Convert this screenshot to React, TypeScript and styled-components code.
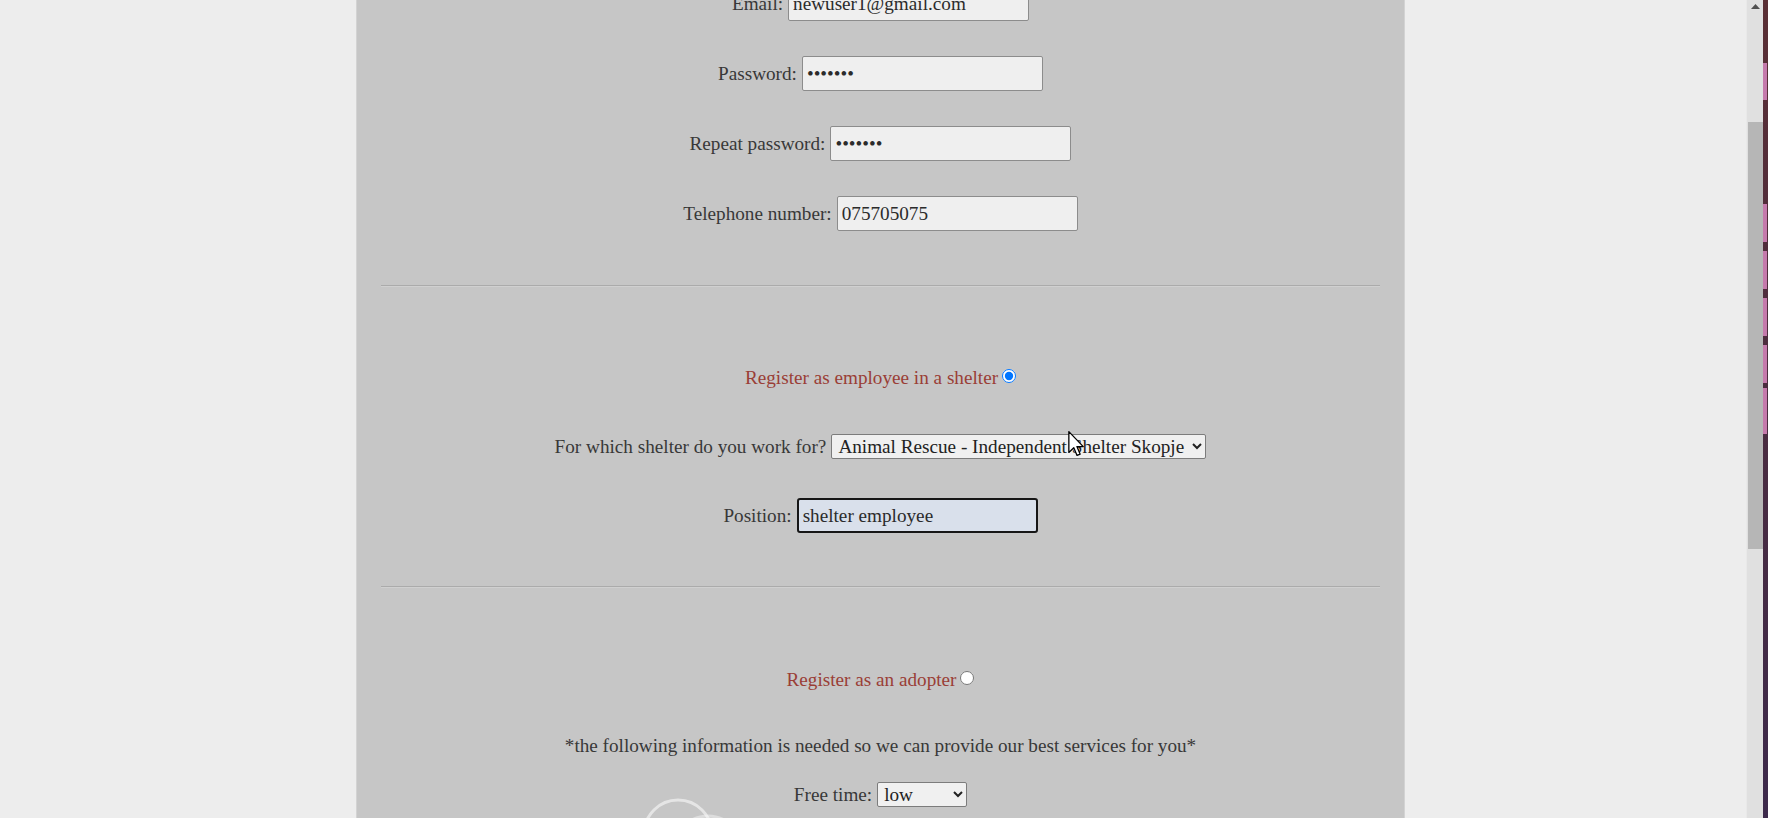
import styled, { createGlobalStyle } from "styled-components";

const GlobalStyle = createGlobalStyle`
  html, body {
    margin: 0;
    padding: 0;
    overflow: hidden;
  }
  body {
    font-family: "Liberation Serif", "Times New Roman", serif;
  }
`;

const Screen = styled.div`
  display: flex;
  width: 1768px;
  height: 818px;
  overflow: hidden;
`;

const Page = styled.main`
  position: relative;
  flex: 1;
  background: #ededed;
  overflow: hidden;
`;

const Panel = styled.section`
  box-sizing: border-box;
  width: 1049px;
  min-height: 900px;
  margin: -14px 0 0 356px;
  padding: 0 24px 60px;
  display: flex;
  flex-direction: column;
  background: #c6c6c6;
  border-left: 1px solid #d3d3d3;
  border-right: 1px solid #d3d3d3;
  font-size: 19.2px;
  color: #383838;
`;

const Row = styled.div<{ $top?: number; $h?: number }>`
  display: flex;
  justify-content: center;
  align-items: center;
  gap: 5px;
  height: ${(p) => p.$h ?? 35}px;
  margin-top: ${(p) => p.$top ?? 0}px;
`;

const Label = styled.label`
  white-space: nowrap;
  line-height: 22px;
`;

const TextInput = styled.input<{ $focused?: boolean }>`
  box-sizing: border-box;
  width: 241px;
  height: 35px;
  padding: 0 4px;
  font-family: "Liberation Serif", "Times New Roman", serif;
  font-size: 19.2px;
  color: #2b2b2b;
  outline: none;
  background: ${(p) => (p.$focused ? "#d9e0eb" : "#efefef")};
  border: ${(p) => (p.$focused ? "2px solid #161616" : "1px solid #8c8c8c")};
  border-radius: ${(p) => (p.$focused ? 3 : 2)}px;
`;

const Select = styled.select<{ $w: number }>`
  box-sizing: border-box;
  width: ${(p) => p.$w}px;
  height: 25px;
  padding: 0 0 0 2px;
  font-family: "Liberation Serif", "Times New Roman", serif;
  font-size: 19.2px;
  color: #222;
  background-color: #f0f0f0;
  border: 1px solid #7c7c7c;
  border-radius: 2px;
`;

const Heading = styled.div<{ $top: number }>`
  display: flex;
  justify-content: center;
  align-items: center;
  gap: 4px;
  height: 22px;
  margin-top: ${(p) => p.$top}px;
  color: #9a3e36;
  line-height: 22px;
`;

const Radio = styled.input`
  width: 14px;
  height: 14px;
  margin: 0 0 4px 0;
  accent-color: #0075ff;
`;

const Note = styled.p<{ $top: number }>`
  margin: ${(p) => p.$top}px 0 0;
  text-align: center;
  line-height: 22px;
`;

const Divider = styled.hr<{ $top: number }>`
  width: 100%;
  height: 0;
  margin: ${(p) => p.$top}px 0 0;
  border: none;
  border-top: 1px solid #ababab;
  border-bottom: 1px solid #d0d0d0;
`;

const Cursor = styled.svg`
  position: absolute;
  left: 1068px;
  top: 431px;
`;

const Watermark = styled.svg`
  position: absolute;
  left: 630px;
  top: 792px;
`;

const Scrollbar = styled.div`
  box-sizing: border-box;
  width: 17px;
  display: flex;
  flex-direction: column;
  align-items: center;
  background: #e0e0e0;
  border-left: 1px solid #e9e9e9;
`;

const ScrollArrow = styled.div`
  height: 17px;
  width: 100%;
  display: flex;
  justify-content: center;
  align-items: flex-start;
  padding-top: 4px;
  box-sizing: border-box;
`;

const Thumb = styled.div<{ $top: number; $h: number }>`
  width: 15px;
  height: ${(p) => p.$h}px;
  margin-top: ${(p) => p.$top}px;
  background: #b6b6b6;
`;

const DesktopEdge = styled.svg`
  display: block;
  flex: none;
`;

const pinkBands = [
  [63, 37],
  [204, 38],
  [251, 38],
  [298, 38],
  [345, 38],
  [388, 46],
];

export default function App() {
  return (
    <Screen>
      <GlobalStyle />
      <Page>
        <Panel>
          <Row>
            <Label>Email:</Label>
            <TextInput type="email" defaultValue="newuser1@gmail.com" />
          </Row>
          <Row $top={35}>
            <Label>Password:</Label>
            <TextInput type="password" defaultValue="1234567" />
          </Row>
          <Row $top={35}>
            <Label>Repeat password:</Label>
            <TextInput type="password" defaultValue="1234567" />
          </Row>
          <Row $top={35}>
            <Label>Telephone number:</Label>
            <TextInput type="text" defaultValue="075705075" />
          </Row>

          <Divider $top={54} />

          <Heading $top={80}>
            Register as employee in a shelter
            <Radio type="radio" name="role" defaultChecked />
          </Heading>
          <Row $top={45} $h={25}>
            <Label>For which shelter do you work for?</Label>
            <Select $w={375} defaultValue="ar">
              <option value="ar">Animal Rescue - Independent Shelter Skopje</option>
            </Select>
          </Row>
          <Row $top={39}>
            <Label>Position:</Label>
            <TextInput $focused type="text" defaultValue="shelter employee" />
          </Row>

          <Divider $top={53} />

          <Heading $top={81}>
            Register as an adopter
            <Radio type="radio" name="role" />
          </Heading>
          <Note $top={44}>
            *the following information is needed so we can provide our best services for you*
          </Note>
          <Row $top={25} $h={25}>
            <Label>Free time:</Label>
            <Select $w={90} defaultValue="low">
              <option value="low">low</option>
              <option value="medium">medium</option>
              <option value="high">high</option>
            </Select>
          </Row>
        </Panel>

        <Watermark width="130" height="60" viewBox="0 0 130 60">
          <circle cx="48" cy="42" r="34" fill="none" stroke="rgba(255,255,255,0.55)" strokeWidth="3" />
          <circle cx="78" cy="58" r="34" fill="none" stroke="rgba(255,255,255,0.4)" strokeWidth="3" />
        </Watermark>

        <Cursor width="16" height="26" viewBox="0 0 12 20">
          <path
            d="M0.5 0.5 L0.5 16.5 L4.3 12.9 L6.8 18.8 L9.2 17.8 L6.7 12 L11.6 12 Z"
            fill="#fff"
            stroke="#000"
            strokeWidth="1"
            strokeLinejoin="round"
          />
        </Cursor>
      </Page>

      <Scrollbar>
        <ScrollArrow>
          <svg width="9" height="5" viewBox="0 0 9 5">
            <path d="M0 5 L4.5 0 L9 5 Z" fill="#505050" />
          </svg>
        </ScrollArrow>
        <Thumb $top={105} $h={427} />
      </Scrollbar>

      <DesktopEdge width="5" height="818" viewBox="0 0 5 818">
        <defs>
          <linearGradient id="edge" x1="0" y1="0" x2="0" y2="1">
            <stop offset="0" stopColor="#5a2f35" />
            <stop offset="1" stopColor="#3d2a4c" />
          </linearGradient>
        </defs>
        <rect width="5" height="818" fill="url(#edge)" />
        {pinkBands.map(([y, h]) => (
          <rect key={y} x="0" y={y} width="4" height={h} fill="#c57aac" />
        ))}
      </DesktopEdge>
    </Screen>
  );
}
